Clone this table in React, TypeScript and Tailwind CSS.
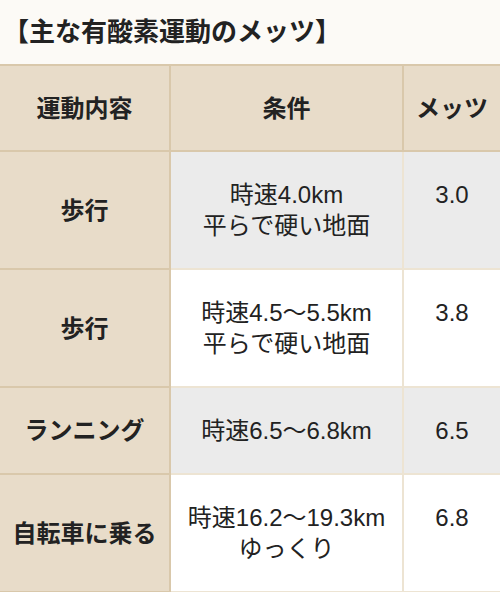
import React from 'react';

interface Row {
  name: string;
  cond: string[];
  mets: string;
  shaded: boolean;
}

const rows: Row[] = [
  { name: '歩行', cond: ['時速4.0km', '平らで硬い地面'], mets: '3.0', shaded: true },
  { name: '歩行', cond: ['時速4.5～5.5km', '平らで硬い地面'], mets: '3.8', shaded: false },
  { name: 'ランニング', cond: ['時速6.5～6.8km'], mets: '6.5', shaded: true },
  { name: '自転車に乗る', cond: ['時速16.2～19.3km', 'ゆっくり'], mets: '6.8', shaded: false },
];

const font = { fontFamily: '"Liberation Sans", "Noto Sans CJK JP", sans-serif' };

const App = () => {
  return (
    <div className="w-[500px] h-[592px] overflow-hidden bg-[#fcfaf6] text-[#222]" style={font}>
      <h2 className="h-[64px] flex items-center pl-[3px] text-[26px] font-bold leading-none">
        【主な有酸素運動のメッツ】
      </h2>
      <table className="w-[500px] table-fixed border-separate border-spacing-0 text-[24px] leading-[31px]">
        <colgroup>
          <col className="w-[171px]" />
          <col className="w-[233px]" />
          <col className="w-[96px]" />
        </colgroup>
        <thead>
          <tr className="bg-[#e8dcc9]">
            <th className="h-[88px] border-t-2 border-b-2 border-r-2 border-[#d9c8ab] font-bold align-middle">
              運動内容
            </th>
            <th className="border-t-2 border-b-2 border-r-2 border-[#d9c8ab] font-bold align-middle">条件</th>
            <th className="border-t-2 border-b-2 border-[#d9c8ab] font-bold align-middle">メッツ</th>
          </tr>
        </thead>
        <tbody>
          {rows.map((r, i) => (
            <tr key={i} className={r.shaded ? 'bg-[#ebebeb]' : 'bg-white'}>
              <th className="bg-[#e8dcc9] border-b-2 border-r-2 border-[#d9c8ab] font-bold align-middle">
                {r.name}
              </th>
              <td className="py-[27px] text-center align-top border-b-2 border-r-2 border-[#ede4d3]">
                {r.cond.map((c) => (
                  <div key={c}>{c}</div>
                ))}
              </td>
              <td className="py-[27px] text-center align-top border-b-2 border-[#ede4d3]">{r.mets}</td>
            </tr>
          ))}
        </tbody>
      </table>
    </div>
  );
};

export default App;
